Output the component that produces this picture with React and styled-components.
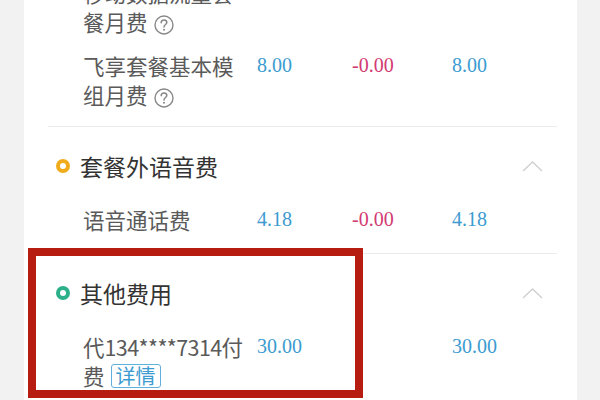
import React from "react";
import styled, { createGlobalStyle } from "styled-components";

const Global = createGlobalStyle`
  html, body { margin: 0; padding: 0; }
  body {
    background: #f2f2f2;
    width: 600px;
    height: 400px;
    overflow: hidden;
    font-family: "Noto Sans CJK SC", "Noto Sans", sans-serif;
  }
`;

const Page = styled.div`
  position: relative;
  width: 600px;
  height: 400px;
  overflow: hidden;
`;

const Card = styled.div`
  margin: -22px 0 0 24px;
  width: 553px;
  background: #ffffff;
  padding: 0 20px 0 24px;
  box-sizing: border-box;
  min-height: 440px;
`;

const Section = styled.div`
  padding: ${(p) => (p.$first ? "0" : "24px")} 0 ${(p) => p.$pb}px;
  border-bottom: 1px solid #ececec;
`;

const Header = styled.div`
  display: flex;
  align-items: center;
  height: 30px;
  margin-bottom: 24px;
`;

const Dot = styled.span`
  width: 14px;
  height: 14px;
  box-sizing: border-box;
  border-radius: 50%;
  border: 4.5px solid ${(p) => p.$color};
  background: #fff;
  margin-left: 8px;
  margin-right: 10px;
  flex: none;
`;

const HeaderTitle = styled.span`
  font-size: 23px;
  color: #333;
  line-height: 30px;
`;

const Chevron = styled.svg`
  margin-left: auto;
  margin-right: 14px;
  flex: none;
`;

const Rows = styled.div`
  display: flex;
  flex-direction: column;
  gap: 15px;
`;

const Row = styled.div`
  display: grid;
  grid-template-columns: 174px 95px 100px 1fr;
  padding-left: 35px;
  align-items: start;
`;

const Label = styled.div`
  font-size: 21.5px;
  line-height: 29px;
  color: #5a5a5a;
  width: 171px;
`;

const Digits = styled.span`
  letter-spacing: -0.6px;
`;

const Amount = styled.div`
  font-family: "Liberation Serif", "Times New Roman", serif;
  font-size: 20px;
  line-height: 29px;
  color: ${(p) => (p.$neg ? "#d23a72" : "#3c9bd0")};
`;

const HelpIcon = styled.svg`
  vertical-align: -4px;
  margin-left: 6px;
`;

const DetailBadge = styled.span`
  display: inline-block;
  margin-left: 6px;
  padding: 0 4px;
  border: 1.5px solid #5fb0da;
  border-radius: 3px;
  color: #3c9bd0;
  font-size: 20px;
  line-height: 22px;
  vertical-align: 1px;
`;

const Highlight = styled.div`
  position: absolute;
  left: 28px;
  top: 248px;
  width: 335px;
  height: 150px;
  box-sizing: border-box;
  border: 8px solid #b61c10;
  pointer-events: none;
`;

const Help = () => (
  <HelpIcon width="20" height="20" viewBox="0 0 20 20">
    <circle cx="10" cy="10" r="9" fill="none" stroke="#888" strokeWidth="1.4" />
    <path
      d="M7.2 7.8 C7.2 6 8.5 5 10 5 C11.6 5 12.8 6 12.8 7.5 C12.8 9.4 10 9.7 10 12"
      fill="none"
      stroke="#888"
      strokeWidth="1.5"
      strokeLinecap="round"
    />
    <circle cx="10" cy="14.8" r="1" fill="#888" />
  </HelpIcon>
);

const Up = () => (
  <Chevron width="21" height="12" viewBox="0 0 21 12">
    <path d="M1 11 L10.5 2 L20 11" fill="none" stroke="#d0d0d0" strokeWidth="1.4" />
  </Chevron>
);

export default function App() {
  return (
    <Page>
      <Global />
      <Card>
        <Section $first $pb={17}>
          <Rows>
            <Row>
              <Label>
                移动数据流量套餐月费
                <Help />
              </Label>
              <Amount>30.00</Amount>
              <Amount $neg>-0.00</Amount>
              <Amount>30.00</Amount>
            </Row>
            <Row>
              <Label>
                飞享套餐基本模组月费
                <Help />
              </Label>
              <Amount>8.00</Amount>
              <Amount $neg>-0.00</Amount>
              <Amount>8.00</Amount>
            </Row>
          </Rows>
        </Section>
        <Section $pb={19}>
          <Header>
            <Dot $color="#f0ac1c" />
            <HeaderTitle>套餐外语音费</HeaderTitle>
            <Up />
          </Header>
          <Rows>
            <Row>
              <Label>语音通话费</Label>
              <Amount>4.18</Amount>
              <Amount $neg>-0.00</Amount>
              <Amount>4.18</Amount>
            </Row>
          </Rows>
        </Section>
        <Section $pb={19}>
          <Header>
            <Dot $color="#2bb08a" />
            <HeaderTitle>其他费用</HeaderTitle>
            <Up />
          </Header>
          <Rows>
            <Row>
              <Label>
                代<Digits>134****7314</Digits>付费
                <DetailBadge>详情</DetailBadge>
              </Label>
              <Amount>30.00</Amount>
              <Amount />
              <Amount>30.00</Amount>
            </Row>
          </Rows>
        </Section>
      </Card>
      <Highlight />
    </Page>
  );
}
